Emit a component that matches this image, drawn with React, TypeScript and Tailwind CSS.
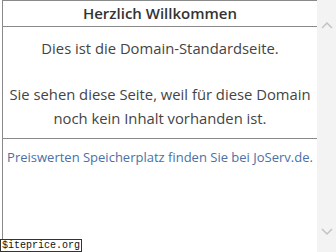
import React from "react";

export default function App() {
  return (
    <div className="w-[336px] h-[252px] bg-white flex overflow-hidden relative" style={{ fontFamily: '"Open Sans", "Noto Sans", sans-serif' }}>
      <div className="w-[317px] h-full flex flex-col pl-[2px]">
        <div className="flex-1 flex flex-col border-l border-t border-[#8a8a8a]">
          <div className="h-[26px] flex items-center justify-center border-b border-[#8a8a8a] text-[15px] font-semibold text-[#333]">
            Herzlich Willkommen
          </div>
          <div className="flex flex-col items-center text-[14.8px] text-[#444] leading-[24px] text-center">
            <p className="mt-[9px]">Dies ist die Domain-Standardseite.</p>
            <p className="mt-[22px]">Sie sehen diese Seite, weil für diese Domain</p>
            <p>noch kein Inhalt vorhanden ist.</p>
          </div>
          <div className="mt-[8px] border-b border-[#8a8a8a]" />
          <div className="mt-[9px] text-[13px] leading-[18px] text-[#4a70a8] text-center">
            Preiswerten Speicherplatz finden Sie bei JoServ.de.
          </div>
        </div>
      </div>
      <div className="flex-1 h-full bg-[#f3f3f3] flex flex-col items-center justify-between pt-[21px] pb-[16px]">
        <svg width="12" height="8" viewBox="0 0 12 8"><path d="M1 7 L6 2 L11 7" stroke="#c2c2c2" strokeWidth="1.5" fill="none" /></svg>
        <svg width="12" height="8" viewBox="0 0 12 8"><path d="M1 1 L6 6 L11 1" stroke="#c2c2c2" strokeWidth="1.5" fill="none" /></svg>
      </div>
      <div className="absolute left-0 bottom-0 border border-[#333] bg-white px-[1px] h-[13px] flex items-center text-[10px] text-[#111] leading-none" style={{ fontFamily: '"Liberation Mono", monospace' }}>
        $iteprice.org
      </div>
    </div>
  );
}
